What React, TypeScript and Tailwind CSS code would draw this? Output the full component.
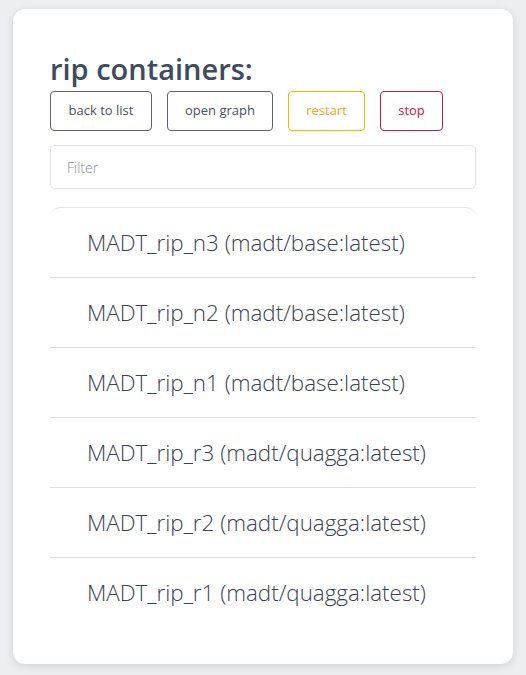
import React from "react";

const items = [
  "MADT_rip_n3 (madt/base:latest)",
  "MADT_rip_n2 (madt/base:latest)",
  "MADT_rip_n1 (madt/base:latest)",
  "MADT_rip_r3 (madt/quagga:latest)",
  "MADT_rip_r2 (madt/quagga:latest)",
  "MADT_rip_r1 (madt/quagga:latest)",
];

export default function App() {
  return (
    <div
      className="min-h-[675px] w-[526px] bg-[#eceef1] px-[13px] pt-[9px]"
      style={{ fontFamily: '"Open Sans", "Noto Sans", sans-serif' }}
    >
      <div className="w-[500px] rounded-[12px] bg-white px-[37px] pt-[40px] pb-[36px] shadow-[0_2px_8px_rgba(0,0,0,0.12)]">
        <h1 className="text-[29px] leading-[40px] font-semibold text-[#3d4a60]">rip containers:</h1>
        <div className="mt-[2px] flex gap-[15px]">
          <button className="h-[40px] w-[102px] rounded-[4px] border border-[#5f646c] text-[13px] text-[#4b5160]">back to list</button>
          <button className="h-[40px] w-[106px] rounded-[4px] border border-[#5f646c] text-[13px] text-[#4b5160]">open graph</button>
          <button className="h-[40px] w-[77px] rounded-[4px] border border-[#f7b500] text-[13px] text-[#f5a623]">restart</button>
          <button className="h-[40px] w-[63px] rounded-[4px] border border-[#c9184a] text-[13px] text-[#c9184a]">stop</button>
        </div>
        <div className="mt-[14px] flex h-[44px] items-center rounded-[5px] border border-[#e3e5ea] px-[16px] text-[14px] font-light text-[#8a8f99]">
          Filter
        </div>
        <div className="mt-[18px] rounded-t-[10px] border-t border-[#e3e5ea]">
          {items.map((t, i) => (
            <div
              key={t}
              className={`flex h-[70px] items-center pl-[37px] text-[22.4px] font-light text-[#3a4252] ${i < items.length - 1 ? "border-b border-[#dcdee2]" : ""}`}
            >
              {t}
            </div>
          ))}
        </div>
      </div>
    </div>
  );
}
